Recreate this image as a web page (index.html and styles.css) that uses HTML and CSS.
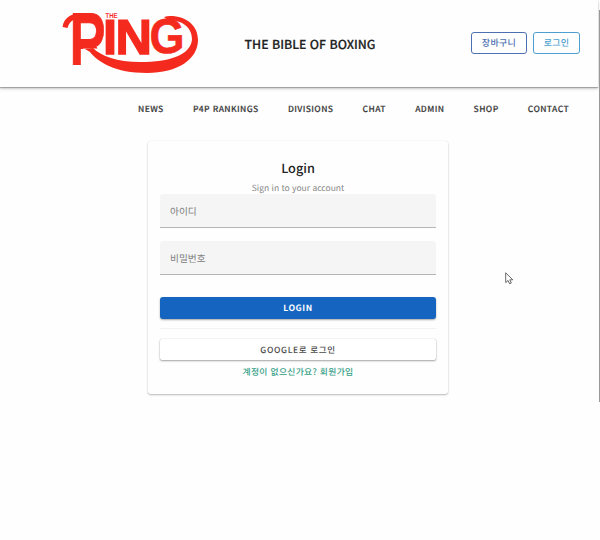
FILE: index.html
```
<!DOCTYPE html>
<html lang="ko">
<head>
<meta charset="utf-8">
<title>The Ring - Login</title>
<link rel="stylesheet" href="styles.css">
</head>
<body>
<header class="header">
  <svg class="logo" viewBox="60 8 142 68" role="img" aria-label="The Ring">
    <defs><clipPath id="bowl"><path d="M60 0H120V48.5H83V65H60Z"/></clipPath></defs>
    <g class="logo-text">
      <text class="logo-the" x="105.5" y="17.8" textLength="12" lengthAdjust="spacingAndGlyphs">THE</text>
      <g clip-path="url(#bowl)"><text class="logo-r" transform="translate(69.8 69.5) scale(.62 1)">R</text></g>
      <text class="logo-letter logo-in" transform="translate(103 53.5) scale(1.03 1)">IN</text>
      <text class="logo-letter" transform="translate(149.5 53) scale(.92 1)">G</text>
    </g>
    <path class="logo-swash" d="M62.5 27C64 17 72 13 83 13L84 18C75 18 70 20 67.5 28ZM85 49L93 48C101 56 117 62 140 62C170 62 191 55 192 39C192 28 183 20 168 20L164 17Q167 16 170 16C187 16 198 26 198 40C198 59 178 73 147 73C115 73 98 62 90 52Z"/>
  </svg>
  <h1 class="slogan">THE BIBLE OF BOXING</h1>
  <div class="actions">
    <button class="outlined cart">장바구니</button>
    <button class="outlined sign-in">로그인</button>
  </div>
</header>
<nav class="nav">
  <a>NEWS</a><a>P4P RANKINGS</a><a>DIVISIONS</a><a>CHAT</a><a>ADMIN</a><a>SHOP</a><a>CONTACT</a>
</nav>
<main class="card">
  <h2 class="title">Login</h2>
  <p class="subtitle">Sign in to your account</p>
  <div class="field">아이디</div>
  <div class="field">비밀번호</div>
  <button class="submit">LOGIN</button>
  <hr class="divider">
  <button class="google">GOOGLE로 로그인</button>
  <a class="join">계정이 없으신가요? 회원가입</a>
</main>
<div class="scrollbar"></div>
<svg class="cursor" viewBox="0 0 9 13"><path d="M.7 .8V10.6L3 8.5L4.6 11.8L6.3 11L4.8 7.8H7.8Z"/></svg>
</body>
</html>
```
FILE: styles.css
```
* { box-sizing: border-box; }
body {
  margin: 0;
  height: 540px;
  overflow: hidden;
  background: #fefefe;
  color: #3a3a3a;
  font-family: "Noto Sans CJK KR", sans-serif;
  text-rendering: geometricPrecision;
}
button { font-family: inherit; padding: 0; text-rendering: inherit; }
.header {
  display: flex;
  align-items: center;
  width: 598px;
  height: 87px;
  padding: 0 18px 0 60px;
  background: #fefefe;
  box-shadow: 0 1px 1px rgba(0,0,0,.25), 0 2px 3px rgba(0,0,0,.18);
}
.logo { width: 142px; height: 68px; margin-top: -3px; flex: none; }
.logo-text, .logo-swash { fill: #f52a1e; }
.logo-text { font-family: "Liberation Sans", sans-serif; font-weight: 700; }
.logo-the { font-size: 7px; }
.logo-r { font-size: 82px; stroke: #f52a1e; stroke-width: 1px; }
.logo-letter { font-size: 49px; stroke: #f52a1e; stroke-width: .6px; }
.logo-in { letter-spacing: -1.5px; stroke-width: 1.4px; }
.slogan {
  margin: 0 0 0 42.5px;
  font-size: 12.3px;
  line-height: 18px;
  font-weight: 500;
  color: #222;
  -webkit-text-stroke: .2px #222;
  white-space: nowrap;
}
.actions { display: flex; gap: 6px; margin: -2px 0 0 auto; }
.outlined {
  height: 22px;
  border: 1px solid;
  border-radius: 3px;
  background: #fff;
  font-size: 9px;
  line-height: 20px;
  font-weight: 500;
  letter-spacing: .3px;
}
.cart { width: 56px; color: #4c70b0; }
.sign-in { width: 47px; color: #4c9fce; }
.nav {
  display: flex;
  justify-content: space-between;
  width: 569px;
  padding: 14.5px 0 0 138px;
  font-size: 8.5px;
  line-height: 15px;
  font-weight: 500;
  letter-spacing: .4px;
  white-space: nowrap;
  -webkit-text-stroke: .15px #3a3a3a;
}
.card {
  display: flex;
  flex-direction: column;
  width: 300px;
  height: 253px;
  margin: 24.5px 0 0 148px;
  padding: 17px 12px 0;
  border-radius: 3px;
  background: #fefefe;
  box-shadow: 0 1px 2px rgba(0,0,0,.27), 0 0 2px rgba(0,0,0,.06);
}
.title { margin: 0; font-size: 12.7px; line-height: 20px; font-weight: 500; text-align: center; color: #222; }
.subtitle { margin: 3px 0 -1px; font-size: 8.5px; line-height: 15px; height: 14px; text-align: center; color: #858585; }
.field {
  height: 34px;
  flex: none;
  margin-bottom: 13px;
  padding: 0 10px;
  border-bottom: 1px solid #b5b5b5;
  border-radius: 3px 3px 0 0;
  background: #f5f5f5;
  color: #808080;
  font-size: 9.7px;
  line-height: 35px;
}
.submit {
  height: 22px;
  flex: none;
  margin-top: 9px;
  border: 0;
  border-radius: 3px;
  background: #1565c0;
  box-shadow: 0 1px 2px rgba(0,0,0,.35);
  color: #fff;
  font-size: 8.6px;
  line-height: 23px;
  font-weight: 700;
  letter-spacing: .6px;
}
.divider { width: 100%; margin: 9px 0 10px; border: 0; border-top: 1px solid #f3f3f3; }
.google {
  height: 21px;
  flex: none;
  border: 0;
  border-radius: 2px;
  background: #fff;
  box-shadow: 0 1px 2px rgba(0,0,0,.35), 0 0 1px rgba(0,0,0,.25);
  color: #4a4a4a;
  font-size: 8.5px;
  line-height: 22px;
  font-weight: 500;
  letter-spacing: .65px;
}
.join { margin-top: 5px; color: #369f87; font-size: 8.8px; line-height: 14px; font-weight: 500; letter-spacing: .3px; text-align: center; }
.scrollbar { position: absolute; left: 599px; top: 10px; width: 1px; height: 392px; background: #999; }
.cursor { position: absolute; left: 505px; top: 272px; width: 9px; height: 13px; fill: #fff; stroke: #444; stroke-width: .8; }
```
